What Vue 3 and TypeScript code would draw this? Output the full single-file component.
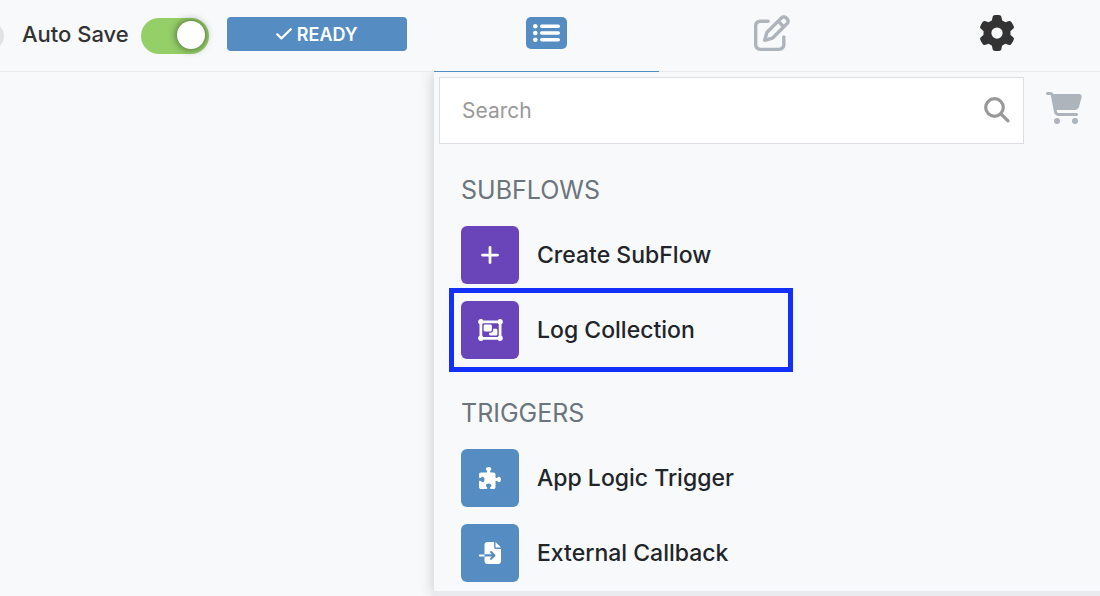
<script setup lang="ts">
import { ref } from 'vue'

interface FlowItem {
  label: string
  tone: 'purple' | 'blue'
  viewBox: string
  path: string
  width: number
  marked?: boolean
}

interface FlowGroup {
  title: string
  items: FlowItem[]
}

const autoSave = ref(true)
const query = ref('')

const groups: FlowGroup[] = [
  {
    title: 'SUBFLOWS',
    items: [
      {
        label: 'Create SubFlow',
        tone: 'purple',
        viewBox: '0 0 448 512',
        width: 20,
        path: 'M256 80c0-17.7-14.3-32-32-32s-32 14.3-32 32V224H48c-17.7 0-32 14.3-32 32s14.3 32 32 32H192V432c0 17.7 14.3 32 32 32s32-14.3 32-32V288H400c17.7 0 32-14.3 32-32s-14.3-32-32-32H256V80z',
      },
      {
        label: 'Log Collection',
        tone: 'purple',
        viewBox: '0 0 576 512',
        width: 25,
        marked: true,
        path: 'M32 119.4C12.9 108.4 0 87.7 0 64C0 28.7 28.7 0 64 0c23.7 0 44.4 12.9 55.4 32H456.6C467.6 12.9 488.3 0 512 0c35.3 0 64 28.7 64 64c0 23.7-12.9 44.4-32 55.4V392.6c19.1 11.1 32 31.7 32 55.4c0 35.3-28.7 64-64 64c-23.7 0-44.4-12.9-55.4-32H119.4c-11.1 19.1-31.7 32-55.4 32c-35.3 0-64-28.7-64-64c0-23.7 12.9-44.4 32-55.4V119.4zM456.6 96H119.4c-5.6 9.7-13.7 17.8-23.4 23.4V392.6c9.7 5.6 17.8 13.7 23.4 23.4H456.6c5.6-9.7 13.7-17.8 23.4-23.4V119.4c-9.7-5.6-17.8-13.7-23.4-23.4zM128 160c0-17.7 14.3-32 32-32H288c17.7 0 32 14.3 32 32v96c0 17.7-14.3 32-32 32H160c-17.7 0-32-14.3-32-32V160zM256 320h32c35.3 0 64-28.7 64-64V224h64c17.7 0 32 14.3 32 32v96c0 17.7-14.3 32-32 32H288c-17.7 0-32-14.3-32-32V320z',
      },
    ],
  },
  {
    title: 'TRIGGERS',
    items: [
      {
        label: 'App Logic Trigger',
        tone: 'blue',
        viewBox: '0 0 512 512',
        width: 22,
        path: 'M192 104.8c0-9.2-5.8-17.3-13.2-22.8C167.2 73.3 160 61.3 160 48c0-26.5 28.7-48 64-48s64 21.5 64 48c0 13.3-7.2 25.3-18.8 34c-7.4 5.5-13.2 13.6-13.2 22.8v0c0 12.8 10.4 23.2 23.2 23.2H336c26.5 0 48 21.5 48 48v56.8c0 12.8 10.4 23.2 23.2 23.2v0c9.2 0 17.3-5.8 22.8-13.2c8.7-11.6 20.7-18.8 34-18.8c26.5 0 48 28.7 48 64s-21.5 64-48 64c-13.3 0-25.3-7.2-34-18.8c-5.5-7.4-13.6-13.2-22.8-13.2v0c-12.8 0-23.2 10.4-23.2 23.2V464c0 26.5-21.5 48-48 48H279.2c-12.8 0-23.2-10.4-23.2-23.2v0c0-9.2 5.8-17.3 13.2-22.8c11.6-8.7 18.8-20.7 18.8-34c0-26.5-28.7-48-64-48s-64 21.5-64 48c0 13.3 7.2 25.3 18.8 34c7.4 5.5 13.2 13.6 13.2 22.8v0c0 12.8-10.4 23.2-23.2 23.2H48c-26.5 0-48-21.5-48-48V343.2C0 330.4 10.4 320 23.2 320v0c9.2 0 17.3 5.8 22.8 13.2C54.7 344.8 66.7 352 80 352c26.5 0 48-28.7 48-64s-21.5-64-48-64c-13.3 0-25.3 7.2-34 18.8C40.5 250.2 32.4 256 23.2 256v0C10.4 256 0 245.6 0 232.8V176c0-26.5 21.5-48 48-48H168.8c12.8 0 23.2-10.4 23.2-23.2v0z',
      },
      {
        label: 'External Callback',
        tone: 'blue',
        viewBox: '0 0 512 512',
        width: 22,
        path: 'M128 64c0-35.3 28.7-64 64-64H352V128c0 17.7 14.3 32 32 32H512V448c0 35.3-28.7 64-64 64H192c-35.3 0-64-28.7-64-64V336H302.1l-39 39c-9.4 9.4-9.4 24.6 0 33.9s24.6 9.4 33.9 0l80-80c9.4-9.4 9.4-24.6 0-33.9l-80-80c-9.4-9.4-24.6-9.4-33.9 0s-9.4 24.6 0 33.9l39 39H128V64zm0 224v48H24c-13.3 0-24-10.7-24-24s10.7-24 24-24H128zM512 128H384V0L512 128z',
      },
    ],
  },
]
</script>

<template>
  <div class="app">
    <header class="topbar">
      <div class="status">
        <span class="edge" aria-hidden="true"></span>
        <label class="switch">
          <span>Auto Save</span>
          <input v-model="autoSave" type="checkbox" role="switch" />
        </label>
        <button class="ready" type="button">
          <svg width="16" height="12" viewBox="0 0 16 12" aria-hidden="true">
            <path d="M1.200 6.300 5.400 10.400 14.800 1.200" />
          </svg>
          READY
        </button>
      </div>
      <nav class="tabs">
        <button class="tab active" type="button" aria-label="Steps">
          <svg width="41" height="32" viewBox="0 0 41 32" aria-hidden="true">
            <rect width="41" height="32" rx="5" fill="#558cc1" />
            <g fill="#fff">
              <circle cx="9.300" cy="9.300" r="2.300" />
              <circle cx="9.300" cy="16" r="2.300" />
              <circle cx="9.300" cy="22.700" r="2.300" />
              <rect x="14" y="7.600" width="20" height="3.400" rx="1.700" />
              <rect x="14" y="14.300" width="20" height="3.400" rx="1.700" />
              <rect x="14" y="21" width="20" height="3.400" rx="1.700" />
            </g>
          </svg>
        </button>
        <button class="tab edit" type="button" aria-label="Edit">
          <svg width="36" height="36" viewBox="0 0 512 512" aria-hidden="true">
            <path d="M441 58.9L453.1 71c9.4 9.4 9.4 24.6 0 33.9L424 134.1 377.9 88 407 58.9c9.4-9.4 24.6-9.4 33.9 0zM209.8 256.2L344 121.9 390.1 168 255.8 302.2c-2.9 2.9-6.5 5-10.4 6.1l-58.5 16.7 16.7-58.5c1.1-3.9 3.2-7.5 6.1-10.4zM373.1 25L175.8 222.2c-8.7 8.7-15 19.4-18.3 31.1l-28.6 100c-2.4 8.4-.1 17.4 6.1 23.6s15.2 8.5 23.6 6.1l100-28.6c11.8-3.4 22.5-9.7 31.1-18.3L487 138.9c28.1-28.1 28.1-73.7 0-101.8L474.9 25C446.8-3.1 401.2-3.1 373.1 25zM88 64C39.4 64 0 103.4 0 152V424c0 48.6 39.4 88 88 88H360c48.6 0 88-39.4 88-88V312c0-13.3-10.7-24-24-24s-24 10.7-24 24V424c0 22.1-17.9 40-40 40H88c-22.1 0-40-17.9-40-40V152c0-22.1 17.9-40 40-40H200c13.3 0 24-10.7 24-24s-10.7-24-24-24H88z" />
          </svg>
        </button>
        <button class="tab settings" type="button" aria-label="Settings">
          <svg width="36" height="36" viewBox="0 0 512 512" aria-hidden="true">
            <path d="M495.9 166.6c3.2 8.7 .5 18.4-6.4 24.6l-43.3 39.4c1.1 8.3 1.7 16.8 1.7 25.4s-.6 17.1-1.7 25.4l43.3 39.4c6.9 6.2 9.6 15.9 6.4 24.6c-4.4 11.9-9.7 23.3-15.8 34.3l-4.7 8.1c-6.6 11-14 21.4-22.1 31.2c-5.9 7.2-15.7 9.6-24.5 6.8l-55.7-17.7c-13.4 10.3-28.2 18.9-44 25.4l-12.5 57.1c-2 9.1-9 16.3-18.2 17.8c-13.8 2.3-28 3.5-42.5 3.5s-28.7-1.2-42.5-3.5c-9.2-1.5-16.2-8.7-18.2-17.8l-12.5-57.1c-15.8-6.5-30.6-15.1-44-25.4L83.1 425.9c-8.8 2.8-18.6 .3-24.5-6.8c-8.1-9.8-15.5-20.2-22.1-31.2l-4.7-8.1c-6.1-11-11.4-22.4-15.8-34.3c-3.2-8.7-.5-18.4 6.4-24.6l43.3-39.4C64.6 273.1 64 264.6 64 256s.6-17.1 1.7-25.4L22.4 191.2c-6.9-6.2-9.6-15.9-6.4-24.6c4.4-11.9 9.7-23.3 15.8-34.3l4.7-8.1c6.6-11 14-21.4 22.1-31.2c5.9-7.2 15.7-9.6 24.5-6.8l55.7 17.7c13.4-10.3 28.2-18.9 44-25.4l12.5-57.1c2-9.1 9-16.3 18.2-17.8C227.3 1.2 241.5 0 256 0s28.7 1.2 42.5 3.5c9.2 1.5 16.2 8.7 18.2 17.8l12.5 57.1c15.8 6.5 30.6 15.1 44 25.4l55.7-17.7c8.8-2.8 18.6-.3 24.5 6.8c8.1 9.8 15.5 20.2 22.1 31.2l4.7 8.1c6.1 11 11.4 22.4 15.8 34.3zM256 336a80 80 0 1 0 0-160 80 80 0 1 0 0 160z" />
          </svg>
        </button>
      </nav>
    </header>

    <div class="body">
      <main class="canvas"></main>
      <aside class="panel">
        <div class="toolbar">
          <label class="search">
            <input v-model="query" type="text" placeholder="Search" aria-label="Search" />
            <svg width="28" height="28" viewBox="0 0 28 28" aria-hidden="true">
              <circle cx="11.500" cy="10.500" r="8.800" />
              <path d="M18 17 25 23.800" />
            </svg>
          </label>
          <button class="cart" type="button" aria-label="Cart">
            <svg width="36" height="32" viewBox="0 0 576 512" aria-hidden="true">
              <path d="M0 24C0 10.7 10.7 0 24 0H69.5c22 0 41.5 12.8 50.6 32h411c26.3 0 45.5 25 38.6 50.4l-41 152.3c-8.5 31.4-37 53.3-69.5 53.3H170.7l5.4 28.5c2.2 11.3 12.1 19.5 23.6 19.5H488c13.3 0 24 10.7 24 24s-10.7 24-24 24H199.7c-34.6 0-64.3-24.6-70.7-58.5L77.4 54.5c-.7-3.8-4-6.5-7.9-6.5H24C10.7 48 0 37.3 0 24zM128 464a48 48 0 1 1 96 0 48 48 0 1 1 -96 0zm336-48a48 48 0 1 1 0 96 48 48 0 1 1 0-96z" />
            </svg>
          </button>
        </div>
        <section v-for="group in groups" :key="group.title" class="group">
          <h2>{{ group.title }}</h2>
          <ul>
            <li v-for="item in group.items" :key="item.label" :class="{ marked: item.marked }">
              <button class="item" type="button">
                <span class="tile" :class="item.tone">
                  <svg :width="item.width" height="22" :viewBox="item.viewBox" aria-hidden="true">
                    <path :d="item.path" />
                  </svg>
                </span>
                {{ item.label }}
              </button>
            </li>
          </ul>
        </section>
      </aside>
    </div>
  </div>
</template>

<style>
body {
  margin: 0;
  background: #f8f9fb;
}
</style>

<style scoped>
.app {
  display: flex;
  flex-direction: column;
  height: 100vh;
  overflow: hidden;
  background: #f8f9fb;
  color: #212529;
  font-family: Inter, "Liberation Sans", sans-serif;
}

button {
  padding: 0;
  border: 0;
  background: none;
  color: inherit;
  font: inherit;
  cursor: pointer;
}

svg {
  display: block;
  fill: currentColor;
}

.topbar {
  display: flex;
  flex: none;
  height: 72px;
}

.status {
  display: flex;
  flex: 1;
  align-items: flex-start;
  box-sizing: border-box;
  min-width: 0;
  overflow: hidden;
  border-bottom: 1px solid #e9ebed;
}

.edge {
  flex: none;
  width: 28px;
  height: 28px;
  margin: 22px 18px 0 -24px;
  border-radius: 50%;
  background: #e2e2e2;
}

.switch {
  display: flex;
  flex: none;
  gap: 12px;
  margin-right: 18px;
  color: #333;
  font-size: 22px;
  font-weight: 500;
  line-height: 36px;
  white-space: nowrap;
}

.switch span {
  margin-top: 16px;
}

.switch input {
  width: 68px;
  height: 36px;
  margin: 18px 0 0;
  padding: 3px 4px;
  box-sizing: border-box;
  border-radius: 18px;
  background: #c8ccd0;
  appearance: none;
}

.switch input::before {
  content: "";
  display: block;
  width: 28px;
  height: 28px;
  border-radius: 50%;
  background: #fff;
  box-shadow: 0 0 8px rgba(0, 0, 0, 0.6);
}

.switch input:checked {
  background: #95cf68;
}

.switch input:checked::before {
  margin-left: auto;
}

.ready {
  display: flex;
  flex: none;
  align-items: center;
  justify-content: center;
  gap: 5px;
  width: 180px;
  height: 34px;
  margin-top: 17px;
  border-radius: 4px;
  background: #558cc1;
  color: #fff;
  font-size: 18px;
  font-weight: 600;
}

.ready svg {
  fill: none;
  stroke: currentColor;
  stroke-width: 2.200;
  stroke-linecap: round;
  stroke-linejoin: round;
}

.tabs,
.panel {
  flex: none;
  box-sizing: border-box;
  width: 666px;
}

.tabs {
  display: flex;
  overflow: hidden;
}

.tab {
  display: flex;
  flex: none;
  align-items: center;
  justify-content: center;
  box-sizing: border-box;
  width: 225px;
  padding-bottom: 6px;
  border-bottom: 1px solid #e9ebed;
}

.tab.active {
  border-bottom-color: #4f8fc3;
}

.edit,
.cart {
  color: #aeb4bb;
}

.settings {
  color: #333;
}

.body {
  display: flex;
  flex: 1;
  min-height: 0;
  overflow: hidden;
}

.canvas {
  flex: 1;
}

.panel {
  padding: 5px;
  border-bottom: 5px solid #e9ebee;
  background: #f8f9fb;
  box-shadow: 0 0 14px rgba(0, 0, 0, 0.2);
}

.toolbar {
  display: flex;
  gap: 22px;
  margin-right: 13px;
}

.search {
  display: flex;
  flex: 1;
  align-items: center;
  box-sizing: border-box;
  height: 67px;
  padding: 0 12px 0 22px;
  border: 1px solid #dcdfe3;
  background: #fff;
}

.search input {
  flex: 1;
  min-width: 0;
  padding: 0;
  border: 0;
  outline: 0;
  background: none;
  color: #333;
  font: inherit;
  font-size: 21px;
}

.search input::placeholder {
  color: #999;
  opacity: 1;
}

.search svg {
  fill: none;
  stroke: #999;
  stroke-width: 3.200;
  stroke-linecap: round;
}

.cart {
  align-self: flex-start;
  margin-top: 15px;
}

.group {
  padding: 28px 22px 0;
}

h2 {
  margin: 0 0 18px;
  color: #6c757d;
  font-size: 25px;
  font-weight: 400;
  line-height: 36px;
}

ul {
  display: flex;
  flex-direction: column;
  gap: 17px;
  margin: 0;
  padding: 0;
  list-style: none;
}

.group + .group {
  padding-top: 36px;
}

.item {
  display: flex;
  align-items: center;
  gap: 18px;
  font-size: 23px;
  font-weight: 500;
  white-space: nowrap;
}

.tile {
  display: grid;
  place-items: center;
  width: 58px;
  height: 58px;
  border-radius: 6px;
  color: #fff;
}

.purple {
  background: #6a45b9;
}

.blue {
  background: #558cc1;
}

.marked {
  position: relative;
}

.marked::after {
  content: "";
  position: absolute;
  top: -13px;
  left: -12px;
  box-sizing: border-box;
  width: 344px;
  height: 84px;
  border: 5px solid #1230fa;
  pointer-events: none;
}
</style>
